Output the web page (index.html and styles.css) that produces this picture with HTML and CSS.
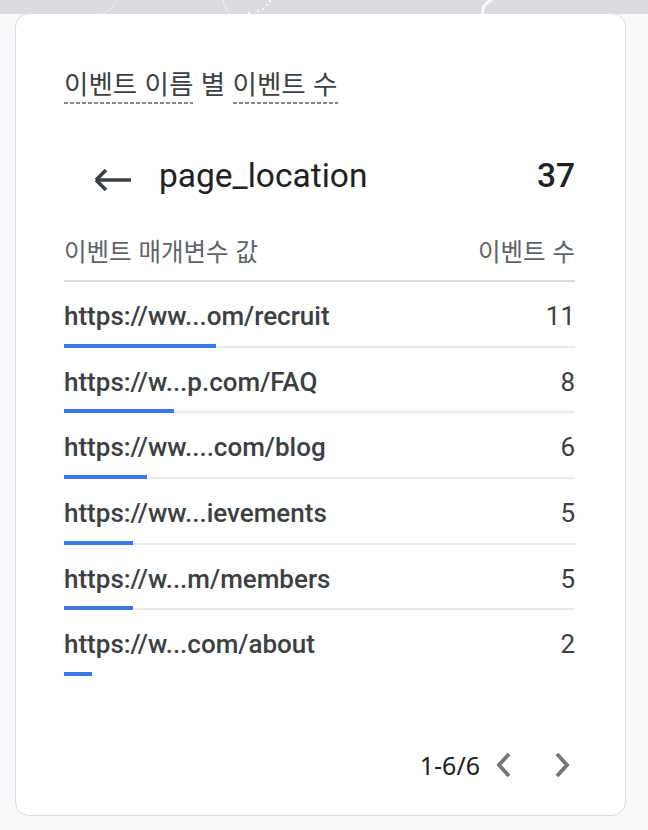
FILE: index.html
```html
<!DOCTYPE html>
<html lang="ko">
<head>
    <meta charset="UTF-8">
    <meta name="viewport" content="width=device-width, initial-scale=1.0">
    <title>이벤트 이름 별 이벤트 수</title>
    <link rel="stylesheet" href="styles.css">
</head>
<body>

<div class="topbar">
    <svg width="648" height="14" viewBox="0 0 648 14">
        <path d="M103 14C108 12 112 8 117 0" fill="none" stroke="#eef0f2" stroke-width="1"/>
        <path d="M223 0C224 6 227 10 230 14" fill="none" stroke="#eef0f2" stroke-width="1"/>
        <path d="M248 13h2M257 11h2M262 9h2M266 5h2M269 1h2" stroke="#f8f9fa" stroke-width="2"/>
        <path d="M492 0C484 3 482 9 483 14" fill="none" stroke="#f8f9fa" stroke-width="3"/>
    </svg>
</div>

<div class="card">
    <h2 class="card-title">
        <span class="dotted">이벤트 이름</span> 별 <span class="dotted">이벤트 수</span>
    </h2>

    <div class="drill">
        <svg class="back" width="40" height="28" viewBox="0 0 40 28">
            <path d="M3 14H38M3 14L13 4M3 14L13 24" fill="none" stroke="#3c4043" stroke-width="3.6"/>
        </svg>
        <span class="drill-name">page_location</span>
        <span class="drill-total">37</span>
    </div>

    <div class="table-head">
        <span>이벤트 매개변수 값</span>
        <span>이벤트 수</span>
    </div>

    <div class="rows">
        <div class="row">
            <div class="cells"><span class="label">https://ww...om/recruit</span><span class="value">11</span></div>
            <div class="track"><div class="bar" style="width: 29.73%"></div></div>
        </div>
        <div class="row">
            <div class="cells"><span class="label">https://w...p.com/FAQ</span><span class="value">8</span></div>
            <div class="track"><div class="bar" style="width: 21.62%"></div></div>
        </div>
        <div class="row">
            <div class="cells"><span class="label">https://ww....com/blog</span><span class="value">6</span></div>
            <div class="track"><div class="bar" style="width: 16.22%"></div></div>
        </div>
        <div class="row">
            <div class="cells"><span class="label">https://ww...ievements</span><span class="value">5</span></div>
            <div class="track"><div class="bar" style="width: 13.51%"></div></div>
        </div>
        <div class="row">
            <div class="cells"><span class="label">https://w...m/members</span><span class="value">5</span></div>
            <div class="track"><div class="bar" style="width: 13.51%"></div></div>
        </div>
        <div class="row last">
            <div class="cells"><span class="label">https://w...com/about</span><span class="value">2</span></div>
            <div class="track"><div class="bar" style="width: 5.41%"></div></div>
        </div>
    </div>

    <div class="pager">
        <span class="pager-text">1-6/6</span>
        <svg class="chev" width="20" height="26" viewBox="0 0 20 26">
            <path d="M15 2L5 13L15 24" fill="none" stroke="#757575" stroke-width="3.8"/>
        </svg>
        <svg class="chev next" width="20" height="26" viewBox="0 0 20 26">
            <path d="M5 2L15 13L5 24" fill="none" stroke="#757575" stroke-width="3.8"/>
        </svg>
    </div>
</div>

</body>
</html>
```

FILE: styles.css
```css
body {
    margin: 0;
    padding: 0;
    background-color: #f8f9fa;
    font-family: Roboto, "Noto Sans CJK KR", sans-serif;
    color: #3c4043;
}
.topbar {
    height: 14px;
    background-color: #dadce0;
}
.topbar svg {
    display: block;
}
.card {
    box-sizing: border-box;
    width: 611px;
    height: 803px;
    margin-left: 15px;
    margin-top: -1px;
    padding: 0 50px 0 48px;
    background-color: #fff;
    border: 1.5px solid #dadce0;
    border-radius: 14px;
    display: flex;
    flex-direction: column;
}
.card-title {
    margin: 52px 0 0;
    font-family: "Noto Sans CJK KR", sans-serif;
    font-size: 26.5px;
    font-weight: 400;
    line-height: 34px;
    color: #3c4043;
}
.dotted {
    padding-bottom: 2px;
    background-image: repeating-linear-gradient(to right, #80868b 0 4px, transparent 4px 6px);
    background-size: 100% 2px;
    background-repeat: no-repeat;
    background-position: left bottom;
}
.drill {
    display: flex;
    align-items: center;
    height: 60px;
    margin-top: 45px;
}
.back {
    margin-left: 29px;
    margin-right: 26px;
    margin-top: 10px;
}
.drill-name {
    flex: 1;
    font-size: 33.5px;
    color: #202124;
}
.drill-total {
    font-size: 33.5px;
    font-weight: 500;
    color: #202124;
}
.table-head {
    display: flex;
    justify-content: space-between;
    align-items: center;
    height: 60px;
    margin-top: 15px;
    font-family: "Noto Sans CJK KR", sans-serif;
    font-size: 24.5px;
    color: #5f6368;
    border-bottom: 2px solid #dadce0;
}
.row {
    height: 65.7px;
    display: flex;
    flex-direction: column;
}
.cells {
    flex: 1;
    display: flex;
    justify-content: space-between;
    align-items: center;
    padding-top: 6px;
}
.label {
    font-size: 26px;
    font-weight: 500;
}
.value {
    font-size: 26px;
}
.track {
    height: 4px;
    background-image: linear-gradient(to top, #e8eaed 2px, transparent 2px);
}
.row.last .track {
    background-image: none;
}
.bar {
    height: 4px;
    background-color: #3b78e7;
}
.pager {
    display: flex;
    justify-content: flex-end;
    align-items: center;
    margin-top: 72px;
    margin-right: 3px;
}
.pager-text {
    font-family: "Noto Sans", sans-serif;
    font-size: 25px;
    color: #202124;
    margin-right: 14px;
}
.chev.next {
    margin-left: 38px;
}
```
